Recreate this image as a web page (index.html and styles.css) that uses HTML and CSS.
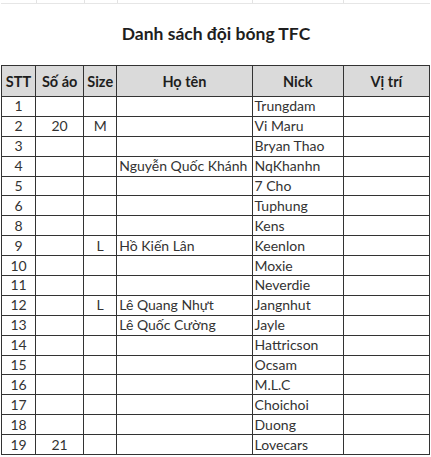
FILE: index.html
```html
<!DOCTYPE html>
<html lang="vi">
<head>
<meta charset="utf-8">
<title>Danh sách đội bóng TFC</title>
<link rel="stylesheet" href="styles.css">
</head>
<body>
<div class="sheet">
  <div class="gridtop">
    <span class="tick t1"></span><span class="tick t2"></span><span class="tick t3"></span><span class="tick t4"></span><span class="tick t5"></span>
  </div>
  <h1 class="title">Danh sách đội bóng TFC</h1>
  <table class="roster">
    <colgroup>
      <col class="c-stt"><col class="c-so"><col class="c-size"><col class="c-name"><col class="c-nick"><col class="c-pos">
    </colgroup>
    <thead>
      <tr><th>STT</th><th>Số áo</th><th>Size</th><th>Họ tên</th><th>Nick</th><th>Vị trí</th></tr>
    </thead>
    <tbody>
      <tr><td class="ctr">1</td><td class="ctr"></td><td class="ctr"></td><td></td><td>Trungdam</td><td></td></tr>
      <tr><td class="ctr">2</td><td class="ctr">20</td><td class="ctr">M</td><td></td><td>Vi Maru</td><td></td></tr>
      <tr><td class="ctr">3</td><td class="ctr"></td><td class="ctr"></td><td></td><td>Bryan Thao</td><td></td></tr>
      <tr><td class="ctr">4</td><td class="ctr"></td><td class="ctr"></td><td>Nguyễn Quốc Khánh</td><td>NqKhanhn</td><td></td></tr>
      <tr><td class="ctr">5</td><td class="ctr"></td><td class="ctr"></td><td></td><td>7 Cho</td><td></td></tr>
      <tr><td class="ctr">6</td><td class="ctr"></td><td class="ctr"></td><td></td><td>Tuphung</td><td></td></tr>
      <tr><td class="ctr">8</td><td class="ctr"></td><td class="ctr"></td><td></td><td>Kens</td><td></td></tr>
      <tr><td class="ctr">9</td><td class="ctr"></td><td class="ctr">L</td><td>Hồ Kiến Lân</td><td>Keenlon</td><td></td></tr>
      <tr><td class="ctr">10</td><td class="ctr"></td><td class="ctr"></td><td></td><td>Moxie</td><td></td></tr>
      <tr><td class="ctr">11</td><td class="ctr"></td><td class="ctr"></td><td></td><td>Neverdie</td><td></td></tr>
      <tr><td class="ctr">12</td><td class="ctr"></td><td class="ctr">L</td><td>Lê Quang Nhựt</td><td>Jangnhut</td><td></td></tr>
      <tr><td class="ctr">13</td><td class="ctr"></td><td class="ctr"></td><td>Lê Quốc Cường</td><td>Jayle</td><td></td></tr>
      <tr><td class="ctr">14</td><td class="ctr"></td><td class="ctr"></td><td></td><td>Hattricson</td><td></td></tr>
      <tr><td class="ctr">15</td><td class="ctr"></td><td class="ctr"></td><td></td><td>Ocsam</td><td></td></tr>
      <tr><td class="ctr">16</td><td class="ctr"></td><td class="ctr"></td><td></td><td>M.L.C</td><td></td></tr>
      <tr><td class="ctr">17</td><td class="ctr"></td><td class="ctr"></td><td></td><td>Choichoi</td><td></td></tr>
      <tr><td class="ctr">18</td><td class="ctr"></td><td class="ctr"></td><td></td><td>Duong</td><td></td></tr>
      <tr><td class="ctr">19</td><td class="ctr">21</td><td class="ctr"></td><td></td><td>Lovecars</td><td></td></tr>
    </tbody>
  </table>
</div>
</body>
</html>
```
FILE: styles.css
```css
html, body {
  margin: 0;
  padding: 0;
  background: #ffffff;
}

.sheet {
  width: 431px;
  height: 457px;
  overflow: hidden;
  font-family: Lato, "Open Sans", "Liberation Sans", sans-serif;
  color: #2e2e2e;
}

.gridtop {
  position: relative;
  height: 3px;
  margin: 0 1px;
  border-bottom: 1px solid #e6e6e6;
}

.tick {
  position: absolute;
  top: 0;
  width: 1px;
  height: 3px;
  background: #e3e3e3;
}
.t1 { left: 35px; }
.t2 { left: 83px; }
.t3 { left: 116px; }
.t4 { left: 251px; }
.t5 { left: 342px; }

.title {
  margin: 0;
  height: 61px;
  line-height: 60px;
  text-align: center;
  font-size: 17.5px;
  font-weight: 700;
  color: #1e1e1e;
  padding-left: 1px;
}

.roster {
  margin-left: 1px;
  width: 429px;
  border-collapse: collapse;
  table-layout: fixed;
  font-size: 14px;
}

.c-stt { width: 34px; }
.c-so { width: 48px; }
.c-size { width: 33px; }
.c-name { width: 135px; }
.c-nick { width: 91px; }
.c-pos { width: 86px; }

.roster th,
.roster td {
  border: 1.5px solid #333333;
  padding: 0 2px;
  white-space: nowrap;
  overflow: hidden;
}

.roster th {
  height: 30px;
  background: #dadada;
  font-weight: 700;
  font-size: 14.5px;
  text-align: center;
  color: #1e1e1e;
}

.roster td {
  height: 18.9px;
  line-height: 18px;
  text-align: left;
  color: #333333;
}

.roster td.ctr {
  text-align: center;
}
```
